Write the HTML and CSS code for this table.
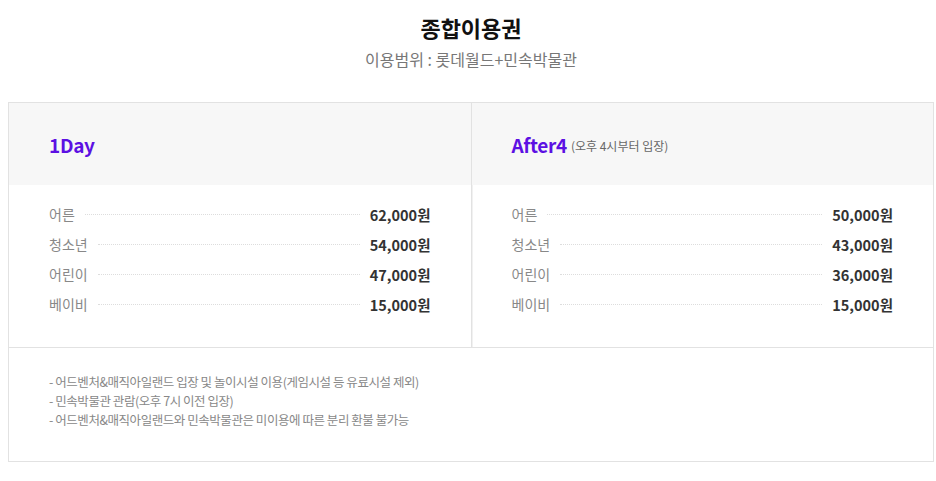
FILE: index.html
```html
<!DOCTYPE html>
<html>
<head lang="ko">
    <meta charset="UTF-8">
    <title>종합이용권</title>
    <link rel="stylesheet" href="styles.css">
</head>
<body>
    <div id="ticket">
        <div class="head">
            <h2>종합이용권</h2>
            <p>이용범위 : 롯데월드+민속박물관</p>
        </div>
        <div class="box">
            <div class="cols">
                <div class="col">
                    <div class="col-tit"><strong>1Day</strong></div>
                    <ul class="price">
                        <li><span class="who">어른</span><span class="dot"></span><b>62,000원</b></li>
                        <li><span class="who">청소년</span><span class="dot"></span><b>54,000원</b></li>
                        <li><span class="who">어린이</span><span class="dot"></span><b>47,000원</b></li>
                        <li><span class="who">베이비</span><span class="dot"></span><b>15,000원</b></li>
                    </ul>
                </div>
                <div class="col">
                    <div class="col-tit"><strong>After4</strong> <em>(오후 4시부터 입장)</em></div>
                    <ul class="price">
                        <li><span class="who">어른</span><span class="dot"></span><b>50,000원</b></li>
                        <li><span class="who">청소년</span><span class="dot"></span><b>43,000원</b></li>
                        <li><span class="who">어린이</span><span class="dot"></span><b>36,000원</b></li>
                        <li><span class="who">베이비</span><span class="dot"></span><b>15,000원</b></li>
                    </ul>
                </div>
            </div>
            <ul class="notice">
                <li>- 어드벤처&amp;매직아일랜드 입장 및 놀이시설 이용(게임시설 등 유료시설 제외)</li>
                <li>- 민속박물관 관람(오후 7시 이전 입장)</li>
                <li>- 어드벤처&amp;매직아일랜드와 민속박물관은 미이용에 따른 분리 환불 불가능</li>
            </ul>
        </div>
    </div>
</body>
</html>
```

FILE: styles.css
```css
*{
    margin: 0;
    padding: 0;
}
ul{
    list-style: none;
}
body{
    font-family: "Noto Sans CJK KR", "Noto Sans", sans-serif;
    color: #333;
    background: #fff;
}
#ticket{
    width: 926px;
    padding: 12px 0 20px 8px;
}
.head{
    text-align: center;
    margin-bottom: 31px;
}
.head h2{
    font-size: 22px;
    line-height: 30px;
    color: #111;
    font-weight: bold;
}
.head p{
    margin-top: 5px;
    font-size: 16px;
    line-height: 24px;
    color: #777;
}
.box{
    border: 1px solid #e2e2e2;
}
.cols{
    display: flex;
    border-bottom: 1px solid #e2e2e2;
}
.col{
    flex: 1;
}
.col + .col{
    border-left: 1px solid #e2e2e2;
    box-shadow: inset 1px 0 0 #f1f1f1;
}
.col-tit{
    height: 82px;
    background: #f7f7f7;
    padding: 0 40px;
    display: flex;
    align-items: center;
}
.col-tit strong{
    font-size: 19px;
    color: #5c10e3;
    letter-spacing: -0.3px;
}
.col-tit em{
    font-style: normal;
    font-size: 12px;
    color: #666;
    margin-left: 4px;
    margin-top: 3px;
}
.price{
    padding: 14px 40px 28px 40px;
}
.price li{
    display: flex;
    align-items: center;
    height: 30px;
}
.price .who{
    font-size: 14px;
    color: #888;
}
.price .dot{
    flex: 1;
    border-top: 1px dotted #ddd;
    margin: 0 10px;
}
.price b{
    font-size: 14.5px;
    color: #333;
}
.notice{
    padding: 24px 40px 32px 40px;
}
.notice li{
    font-size: 12.5px;
    line-height: 19px;
    color: #888;
    letter-spacing: -0.45px;
}
```
